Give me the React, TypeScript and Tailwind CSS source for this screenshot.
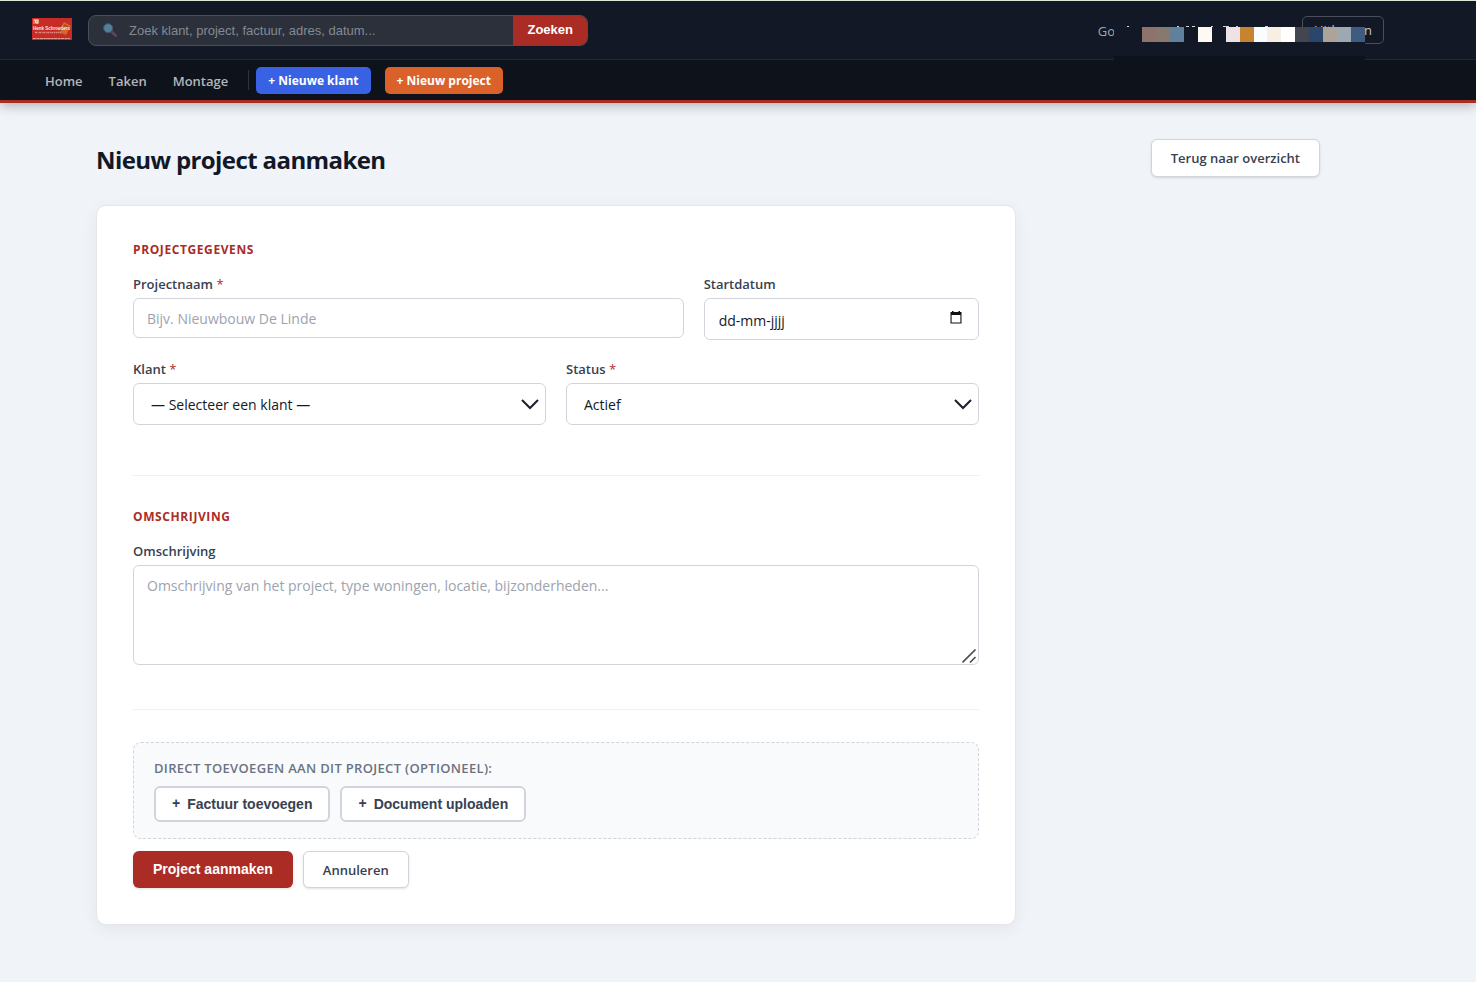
import React from 'react';

const labelClass = 'text-[13px] leading-5 font-semibold text-[#374151]';
const fieldClass =
  'w-full rounded-md border border-[#d1d5db] bg-white text-[14px] leading-5 text-[#111827] outline-none focus:border-[#ab2c25]';
const outlineButton =
  'flex items-center rounded-md border border-[#d1d5db] bg-white px-[19px] text-[13px] leading-5 font-semibold text-[#374151] shadow-sm';
const sectionTitle = 'text-[12px] leading-[22px] font-bold tracking-wider text-[#ab2c25] uppercase';
const navLink = 'px-[13px] pt-[3px] text-[#b4b5b9]';
const navButton = 'flex h-[27px] items-center rounded-[5px] px-3 pt-0.5 text-[12px] font-bold text-white';
const addButton = 'flex h-9 items-center gap-[7px] rounded-md border-2 border-[#d1d5db] bg-white px-4';

const mosaic = [
  'bg-[#90726d]', 'bg-[#87796f]', 'bg-[#61809d]', 'bg-transparent', 'bg-[#fff9f4]', 'bg-transparent',
  'bg-[#efe2e4]', 'bg-[#c5842d]', 'bg-[#f9fdff]', 'bg-[#f8efe4]', 'bg-white', 'bg-[#414650]',
  'bg-[#2b466b]', 'bg-[#aca497]', 'bg-[#9da8b2]', 'bg-[#405b80]',
];

function Logo() {
  return (
    <svg className="-mt-0.5 h-[22px] w-10 shrink-0" viewBox="0 0 40 22" aria-hidden="true">
      <rect width="40" height="22" fill="#c62c25" />
      <rect x="1" y="1" width="6" height="5" fill="#e0703a" />
      <path d="M2 2h1.500v3M4 2h2v3h-2z" fill="none" stroke="#f8d9c8" strokeWidth="1" />
      <path d="M32 4l7 4-5 9-8-3z" fill="#d9652a" />
      <path d="M26 15l7-8 4 3" fill="none" stroke="#8a4a30" strokeWidth="1.200" />
      <text x="1" y="12" fontSize="4.500" fontWeight="700" fontFamily="Liberation Sans" fill="#fbe6e2">Henk Schroeders</text>
      <path d="M3 14.500h26" stroke="#e08a80" strokeWidth="1.500" strokeDasharray="2 .6 1 .5" />
      <path d="M1 20.500h37" stroke="#e59a90" strokeWidth="1" strokeDasharray="3 .5" />
    </svg>
  );
}

function Chevron() {
  return (
    <svg className="pointer-events-none absolute top-3 right-1.5 h-[18px] w-5" viewBox="0 0 20 18" aria-hidden="true">
      <path d="M2 5l8 8 8-8" fill="none" stroke="#1a1f2b" strokeWidth="2" />
    </svg>
  );
}

function Required() {
  return <span className="font-normal text-[#ab2c25]">*</span>;
}

function Header() {
  return (
    <header className="border-b-3 border-[#ab2c25] bg-[#0e121b] shadow-[0_2px_12px_rgba(0,0,0,0.3)]">
      <div className="border-t border-b border-t-[#dfe8d8] border-b-[#23272f] bg-[#121826]">
        <div className="flex h-[58px] max-w-[1416px] items-center justify-between px-8">
          <div className="flex items-center gap-4">
            <Logo />
            <form
              role="search"
              onSubmit={(e) => e.preventDefault()}
              className="flex h-[31px] w-[500px] overflow-hidden rounded-lg border border-[#4a4f5b] bg-[#2b303b] font-['Liberation_Sans',sans-serif]"
            >
              <label htmlFor="search" className="flex items-center pr-3 pl-3.5">
                <svg className="size-[14px]" viewBox="0 0 15 15" role="img" aria-label="Zoeken">
                  <path d="M9 9l4.500 4.500" stroke="#5c4263" strokeWidth="3" strokeLinecap="round" />
                  <circle cx="5.500" cy="5.500" r="4.800" fill="#50809a" stroke="#4d5878" strokeWidth="1" />
                </svg>
              </label>
              <input
                id="search"
                type="search"
                placeholder="Zoek klant, project, factuur, adres, datum..."
                className="min-w-0 flex-1 bg-transparent pt-0.5 text-[13px] text-white outline-none placeholder:text-[#858a92]"
              />
              <button className="bg-[#ab2c25] px-3.5 text-[13px] font-bold text-white">Zoeken</button>
            </form>
          </div>
          <div className="relative flex items-center">
            <span className="mr-[187px] pt-[3px] text-[13px] text-[#a4a8af]">Go</span>
            <button className="h-7 w-[82px] rounded-[5px] border border-[#4a4f59] pt-0.5 text-[13px] text-[#c3c6cb]">
              Uitloggen
            </button>
            <div className="absolute top-[11px] right-[19px] h-[35px] w-[251px] bg-[#121826]" aria-hidden="true">
              <svg className="absolute -top-px left-0 h-px w-[251px]" viewBox="0 0 251 1">
                <path d="M13 .5h2M63 .5h2M72 .5h3M78 .5h3M97 .5h2M109 .5h6M122 .5h2M151 .5h3" stroke="#cfd3dc" />
              </svg>
              <div className="flex h-[15px] pl-7">
                {mosaic.map((c, i) => (
                  <span key={i} className={`h-full flex-1 ${c}`} />
                ))}
              </div>
              <div className="mt-3.5 h-1.5 bg-[#0e121b]" />
            </div>
          </div>
        </div>
      </div>
      <nav className="flex h-10 max-w-[1416px] items-center px-8 text-[13px] font-semibold">
        <a href="#home" className={navLink}>Home</a>
        <a href="#taken" className={navLink}>Taken</a>
        <a href="#montage" className={navLink}>Montage</a>
        <span className="mx-[7px] h-5 w-px bg-[#30343c]" />
        <a href="#klant" className={`${navButton} mr-3.5 bg-[#3961e4]`}>+ Nieuwe klant</a>
        <a href="#project" className={`${navButton} bg-[#da622a]`}>+ Nieuw project</a>
      </nav>
    </header>
  );
}

export default function App() {
  return (
    <div className="min-h-screen bg-[#f0f3f8] font-['Open_Sans','Noto_Sans',sans-serif] text-[#111827]">
      <Header />
      <main className="max-w-[1416px] px-24 pt-9 pb-14">
        <div className="flex items-start justify-between">
          <h1 className="text-[24px] leading-[42px] font-bold tracking-tight">Nieuw project aanmaken</h1>
          <a href="#overzicht" className={`${outlineButton} h-[38px]`}>Terug naar overzicht</a>
        </div>

        <form
          onSubmit={(e) => e.preventDefault()}
          className="mt-6 max-w-[920px] rounded-[10px] border border-[#e5e7eb] bg-white px-9 pt-[33px] pb-9 shadow-[0_4px_16px_rgba(0,0,0,0.06)]"
        >
          <section className="border-b border-[#f0f1f4] pb-[50px]">
            <h2 className={sectionTitle}>Projectgegevens</h2>
            <div className="mt-[13px] grid grid-cols-[2fr_1fr] gap-5">
              <div>
                <label htmlFor="naam" className={`${labelClass} mb-1 block`}>Projectnaam <Required /></label>
                <input id="naam" type="text" placeholder="Bijv. Nieuwbouw De Linde" className={`${fieldClass} h-10 px-[13px] placeholder:text-[#9ca3af]`} />
              </div>
              <div>
                <label htmlFor="datum" className={`${labelClass} mb-1 block`}>Startdatum</label>
                <div className="relative">
                  <input id="datum" type="text" placeholder="dd-mm-jjjj" className={`${fieldClass} h-[42px] px-3.5 pt-0.5 placeholder:text-[#111827]`} />
                  <svg className="pointer-events-none absolute top-[13px] right-[17px] h-[14px] w-3" viewBox="0 0 12 14" aria-hidden="true">
                    <path d="M2 0h1.500v1h5V0H10v1h1.500v11.500H.5V1H2zM1.600 4v7.400h8.800V4z" fill="#111" fillRule="evenodd" />
                  </svg>
                </div>
              </div>
            </div>
            <div className="mt-[19px] grid grid-cols-2 gap-5">
              <div>
                <label htmlFor="klant" className={`${labelClass} mb-1 block`}>Klant <Required /></label>
                <div className="relative">
                  <select id="klant" className={`${fieldClass} h-[42px] appearance-none px-[17px] pt-0.5`}>
                    <option>— Selecteer een klant —</option>
                  </select>
                  <Chevron />
                </div>
              </div>
              <div>
                <label htmlFor="status" className={`${labelClass} mb-1 block`}>Status <Required /></label>
                <div className="relative">
                  <select id="status" className={`${fieldClass} h-[42px] appearance-none px-[17px] pt-0.5`}>
                    <option>Actief</option>
                  </select>
                  <Chevron />
                </div>
              </div>
            </div>
          </section>

          <section className="border-b border-[#f0f1f4] pt-[30px] pb-11">
            <h2 className={sectionTitle}>Omschrijving</h2>
            <label htmlFor="omschrijving" className={`${labelClass} mt-[13px] mb-1 block`}>Omschrijving</label>
            <div className="relative">
              <textarea
                id="omschrijving"
                placeholder="Omschrijving van het project, type woningen, locatie, bijzonderheden..."
                className={`${fieldClass} block h-[100px] resize-none px-[13px] py-2.5 placeholder:text-[#9ca3af]`}
              />
              <svg className="pointer-events-none absolute right-0.5 bottom-px size-[15px]" viewBox="0 0 15 15" aria-hidden="true">
                <path d="M.5 13.500L13.500 .5M8 13.500l5.500-5.500" fill="none" stroke="#4b4b4b" strokeWidth="1.600" />
              </svg>
            </div>
          </section>

          <section className="mt-8 rounded-lg border border-dashed border-[#d1d5db] bg-[#f9fafc] px-5 py-4">
            <h3 className="text-[13px] leading-[18px] font-semibold tracking-wide text-[#6b7280] uppercase">
              Direct toevoegen aan dit project (optioneel):
            </h3>
            <div className="mt-[9px] flex gap-2.5 font-['Liberation_Sans',sans-serif] text-[14px] leading-5 font-bold text-[#374151]">
              <button type="button" className={addButton}>
                <span className="-mt-0.5">+</span>Factuur toevoegen
              </button>
              <button type="button" className={addButton}>
                <span className="-mt-0.5">+</span>Document uploaden
              </button>
            </div>
          </section>

          <div className="mt-3 flex h-[37px] gap-2.5">
            <button className="rounded-md bg-[#ab2c25] px-5 font-['Liberation_Sans',sans-serif] text-[14px] font-bold text-white shadow-sm">
              Project aanmaken
            </button>
            <a href="#annuleren" className={outlineButton}>Annuleren</a>
          </div>
        </form>
      </main>
    </div>
  );
}
